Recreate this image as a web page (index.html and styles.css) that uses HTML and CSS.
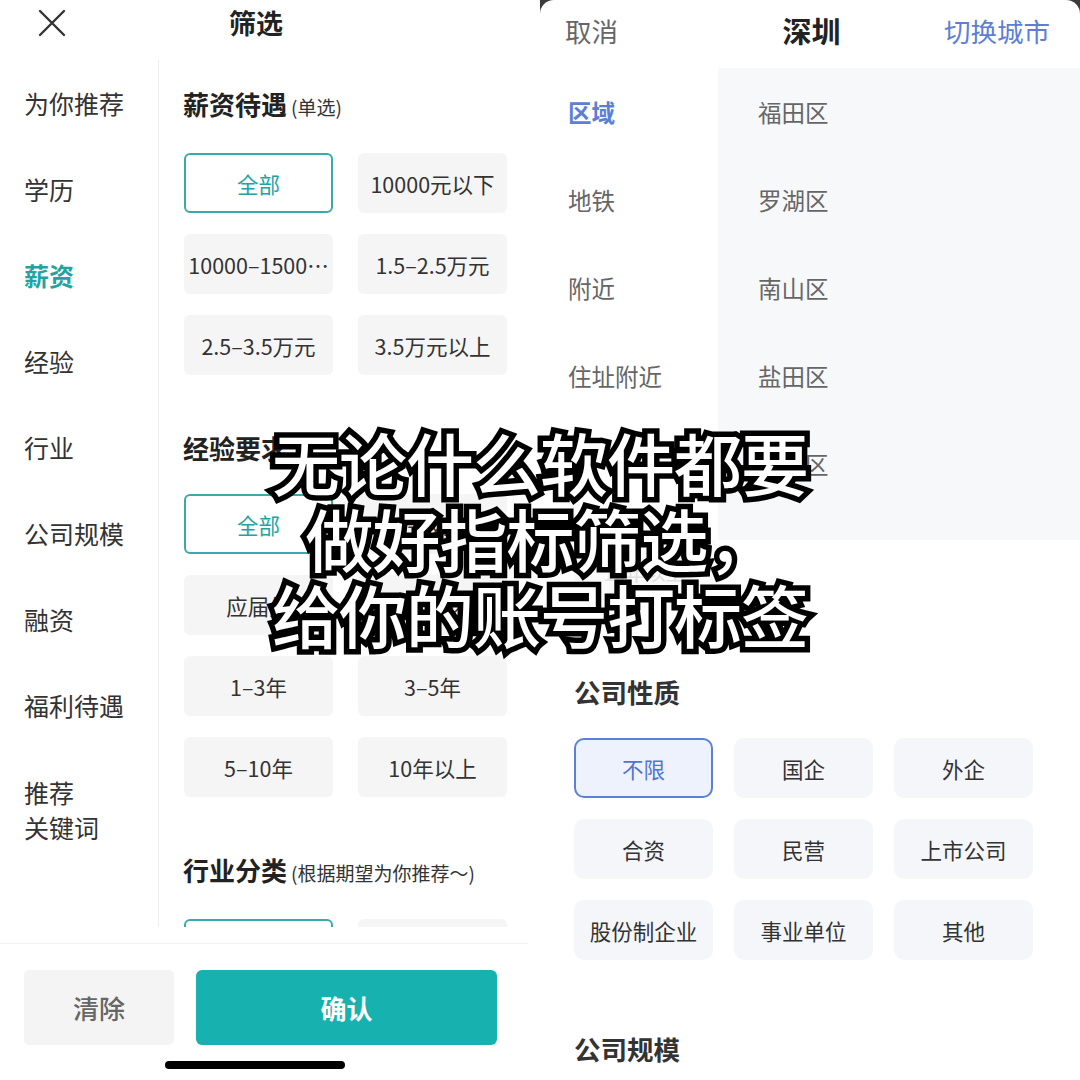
FILE: index.html
```html
<!DOCTYPE html>
<html lang="zh-CN">
<head>
<meta charset="utf-8">
<title>筛选</title>
<link rel="stylesheet" href="styles.css">
</head>
<body>
<div class="canvas">
  <section class="phone lp">
    <header class="lp-head">
      <svg class="close" width="30" height="30" viewBox="0 0 30 30"><path d="M3 3 L27 27 M27 3 L3 27" stroke="#333" stroke-width="2.4" fill="none" stroke-linecap="round"/></svg>
      <h1 class="lp-title">筛选</h1>
    </header>
    <div class="lp-body">
      <nav class="side">
        <div class="side-item">为你推荐</div>
        <div class="side-item">学历</div>
        <div class="side-item active">薪资</div>
        <div class="side-item">经验</div>
        <div class="side-item">行业</div>
        <div class="side-item">公司规模</div>
        <div class="side-item">融资</div>
        <div class="side-item">福利待遇</div>
        <div class="side-item two">推荐<br>关键词</div>
      </nav>
      <div class="content">
        <div class="group">
          <h2 class="g-title">薪资待遇<span class="g-note">(单选)</span></h2>
          <div class="opts">
            <div class="opt sel">全部</div>
            <div class="opt">10000元以下</div>
            <div class="opt">10000–1500…</div>
            <div class="opt">1.5–2.5万元</div>
            <div class="opt">2.5–3.5万元</div>
            <div class="opt">3.5万元以上</div>
          </div>
        </div>
        <div class="group">
          <h2 class="g-title">经验要求</h2>
          <div class="opts">
            <div class="opt sel">全部</div>
            <div class="opt">在校生</div>
            <div class="opt">应届生</div>
            <div class="opt">1年以内</div>
            <div class="opt">1–3年</div>
            <div class="opt">3–5年</div>
            <div class="opt">5–10年</div>
            <div class="opt">10年以上</div>
          </div>
        </div>
        <div class="group">
          <h2 class="g-title">行业分类<span class="g-note">(根据期望为你推荐～)</span></h2>
          <div class="opts">
            <div class="opt sel"></div>
            <div class="opt"></div>
          </div>
        </div>
      </div>
    </div>
    <footer class="lp-foot">
      <div class="foot-btns">
        <button class="btn-clear">清除</button>
        <button class="btn-ok">确认</button>
      </div>
      <div class="home-bar"></div>
    </footer>
  </section>

  <section class="phone rp">
    <div class="popup">
      <header class="rp-head">
        <span class="rp-cancel">取消</span>
        <span class="rp-city">深圳</span>
        <span class="rp-switch">切换城市</span>
      </header>
      <div class="rp-body">
        <ul class="rp-cats">
          <li class="cat active">区域</li>
          <li class="cat">地铁</li>
          <li class="cat">附近</li>
          <li class="cat">住址附近</li>
        </ul>
        <ul class="rp-list">
          <li class="area">福田区</li>
          <li class="area">罗湖区</li>
          <li class="area">南山区</li>
          <li class="area">盐田区</li>
          <li class="area">宝安区</li>
        </ul>
      </div>
    </div>
    <div class="under">
      <div class="ghost">10年以上</div>
      <h2 class="u-title">公司性质</h2>
      <div class="u-opts">
        <div class="u-opt sel">不限</div>
        <div class="u-opt">国企</div>
        <div class="u-opt">外企</div>
        <div class="u-opt">合资</div>
        <div class="u-opt">民营</div>
        <div class="u-opt">上市公司</div>
        <div class="u-opt">股份制企业</div>
        <div class="u-opt">事业单位</div>
        <div class="u-opt">其他</div>
      </div>
      <h2 class="u-title last">公司规模</h2>
    </div>
  </section>

  <div class="overlay">
    <p class="ov-line">无论什么软件都要</p>
    <p class="ov-line">做好指标筛选，</p>
    <p class="ov-line">给你的账号打标签</p>
  </div>
</div>
</body>
</html>
```

FILE: styles.css
```css
* { box-sizing: border-box; margin: 0; padding: 0; }
html, body { width: 1080px; height: 1080px; overflow: hidden; background: #fff; }
body {
  font-family: "Noto Sans CJK SC", "Noto Sans", sans-serif;
  color: #333;
}
ul { list-style: none; }
button { font-family: inherit; border: none; cursor: pointer; }

.canvas {
  position: relative;
  width: 1080px;
  height: 1080px;
  display: grid;
  grid-template-columns: 540px 540px;
}

.phone { height: 1080px; overflow: hidden; display: flex; flex-direction: column; }

/* ---------- Left phone ---------- */
.lp { background: #fff; }
.lp-head {
  position: relative;
  height: 60px;
  display: flex;
  align-items: center;
  justify-content: center;
  padding-bottom: 16px;
}
.close { position: absolute; left: 37px; top: 8px; }
.lp-title { font-size: 27px; font-weight: 700; color: #222; margin-left: -28px; }

.lp-body {
  height: 867px;
  display: flex;
  overflow: hidden;
}
.side {
  width: 159px;
  flex: none;
  border-right: 1.5px solid #eeeeee;
  display: flex;
  flex-direction: column;
}
.side-item {
  height: 86px;
  display: flex;
  align-items: center;
  padding-left: 24px;
  font-size: 25px;
  color: #333;
}
.side-item.active { color: #22a3a2; font-weight: 700; }
.side-item.two { height: 104px; line-height: 35px; padding-top: 20px; }

.content {
  flex: 1;
  padding: 25px 0 0 24px;
  display: flex;
  flex-direction: column;
  gap: 54px;
}
.g-title {
  font-size: 26px;
  font-weight: 700;
  color: #222;
  line-height: 38px;
  display: flex;
  align-items: baseline;
}
.g-note { font-size: 19px; font-weight: 400; color: #333; margin-left: 4px; }
.opts {
  margin-top: 27px;
  padding-left: 1px;
  display: grid;
  grid-template-columns: 149px 149px;
  column-gap: 25px;
  row-gap: 21px;
}
.opt {
  height: 60px;
  border-radius: 6px;
  background: #f5f5f5;
  display: flex;
  align-items: center;
  justify-content: center;
  font-size: 21.5px;
  color: #333;
  white-space: nowrap;
  overflow: hidden;
}
.opt.sel { background: #fff; border: 2px solid #3aa9a8; color: #22a3a2; }

.lp-foot {
  flex: 1;
  display: flex;
  flex-direction: column;
  align-items: flex-start;
  padding-top: 16px;
}
.foot-btns {
  width: 528px;
  border-top: 1px solid #f1f1f1;
  padding: 26px 0 0 24px;
  display: flex;
  gap: 22px;
}
.btn-clear {
  width: 150px;
  height: 75px;
  border-radius: 5px;
  background: #f4f4f4;
  color: #666;
  font-size: 26px;
  font-weight: 500;
}
.btn-ok {
  width: 301px;
  height: 75px;
  border-radius: 6px;
  background: #17b2b0;
  color: #fff;
  font-size: 26px;
  font-weight: 700;
}
.home-bar {
  margin: 16px 0 0 165px;
  width: 180px;
  height: 8px;
  border-radius: 4px;
  background: #000;
}

/* ---------- Right phone ---------- */
.rp { background: #3a3a3a; }
.popup {
  height: 540px;
  background: #fff;
  border-radius: 14px 14px 0 0;
  display: flex;
  flex-direction: column;
}
.rp-head {
  height: 68px;
  display: grid;
  grid-template-columns: 1fr auto 1fr;
  align-items: center;
  padding: 0 30px 8px 25px;
  font-size: 26.5px;
}
.rp-cancel { color: #666; }
.rp-city { font-size: 29px; font-weight: 700; color: #222; margin-left: 8px; }
.rp-switch { color: #5b7fd6; justify-self: end; }

.rp-body { flex: 1; display: flex; }
.rp-cats { width: 178px; flex: none; background: #fff; }
.cat {
  height: 88px;
  display: flex;
  align-items: center;
  padding-left: 28px;
  font-size: 23.5px;
  color: #666;
}
.cat.active { color: #5b7fd6; font-weight: 700; }
.rp-list { flex: 1; background: #f7f8fa; overflow: hidden; }
.area {
  height: 88px;
  display: flex;
  align-items: center;
  padding-left: 40px;
  font-size: 23.5px;
  color: #666;
}

.under {
  flex: 1;
  background: #fff;
  padding-left: 34px;
}
.ghost {
  width: 141px;
  height: 60px;
  background: #fafafa;
  display: flex;
  align-items: center;
  justify-content: center;
  padding-top: 4px;
  font-size: 20px;
  color: #e0e0e0;
}
.u-title {
  margin-top: 73px;
  font-size: 26.5px;
  font-weight: 700;
  color: #333;
  line-height: 38px;
}
.u-title.last { margin-top: 70px; }
.u-opts {
  margin-top: 27px;
  display: grid;
  grid-template-columns: repeat(3, 139px);
  column-gap: 21px;
  row-gap: 21px;
}
.u-opt {
  height: 60px;
  border-radius: 10px;
  background: #f5f6fa;
  display: flex;
  align-items: center;
  justify-content: center;
  font-size: 21.5px;
  color: #333;
}
.u-opt.sel { background: #eef2fd; border: 2px solid #5b80d8; color: #4f74d4; }

/* ---------- Overlay caption ---------- */
.overlay {
  position: absolute;
  left: 0;
  right: 0;
  top: 424px;
  display: flex;
  flex-direction: column;
  align-items: center;
  pointer-events: none;
}
.ov-line {
  font-size: 68px;
  line-height: 76px;
  font-weight: 500;
  color: #fff;
  -webkit-text-stroke: 11px #000;
  paint-order: stroke fill;
  white-space: nowrap;
  letter-spacing: -1px;
}
```
